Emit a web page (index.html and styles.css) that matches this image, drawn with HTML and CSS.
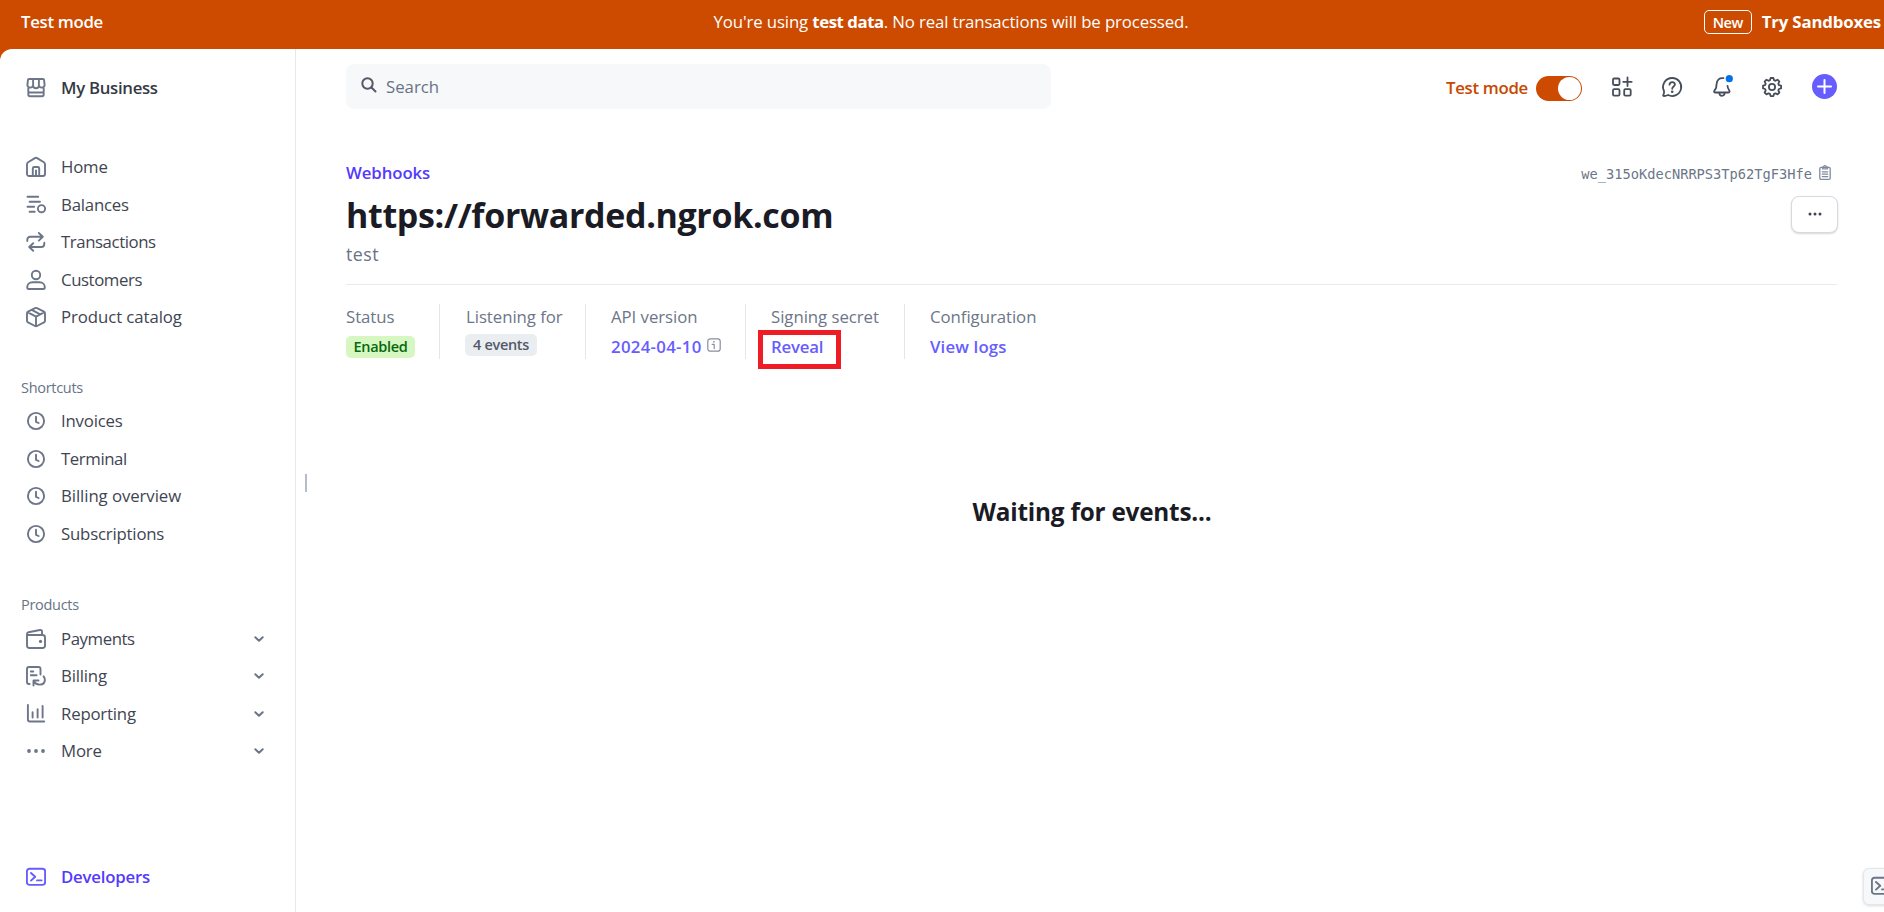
FILE: index.html
```html
<!DOCTYPE html>
<html lang="en">
<head>
<meta charset="utf-8">
<title>Webhooks</title>
<link rel="stylesheet" href="styles.css">
</head>
<body>
<svg class="defs" aria-hidden="true">
  <symbol id="clock" viewBox="0 0 20 20"><circle cx="10" cy="10" r="8.1"/><path d="M10 5.8v5l2.6 1.2"/></symbol>
  <symbol id="chev" viewBox="0 0 20 20"><path d="M6.3 8.2 10 11.8l3.7-3.6"/></symbol>
  <symbol id="term" viewBox="0 0 20 20"><rect x=".9" y="1.7" width="18.2" height="16.2" rx="2.6"/><path d="m5 6 4.2 3.8L5 13.6M11 13.4h4.6"/></symbol>
</svg>

<header class="banner">
  <div class="banner-mode">Test mode</div>
  <div class="banner-note">You're using <b>test data</b>. No real transactions will be processed.</div>
  <div class="banner-cta"><span class="new">New</span><span class="try">Try Sandboxes</span></div>
</header>

<div class="app">
  <nav class="sidebar">
    <a class="item business">
      <svg class="ico" viewBox="0 0 20 20"><path d="M3.2 1h13.6q1.2 0 1.3 1.2l.5 5a2.9 2.7 0 0 1-5.7.4 2.9 2.7 0 0 1-5.8 0 2.9 2.7 0 0 1-5.7-.4l.5-5Q2 1 3.2 1ZM7.1 1v6.600M12.900 1v6.600M2.300 10.500v6q0 1.700 1.700 1.700h12q1.700 0 1.700-1.700v-6M2.300 14.500h15.400"/></svg>
      <span>My Business</span></a>

    <div class="group main">
      <a class="item"><svg class="ico" viewBox="0 0 20 20"><path d="M1 7.300Q1 6 2.100 5.300L8.900 1.100q1.100-.6 2.200 0l6.800 4.200q1.100.7 1.100 2v9.400q0 2.300-2.300 2.300H3.300Q1 19 1 16.700ZM6.800 19v-7.600q0-1.400 1.400-1.400h3.600q1.400 0 1.400 1.400V19M10 13.500V19"/></svg><span>Home</span></a>
      <a class="item"><svg class="ico" viewBox="0 0 20 20"><path d="M1.500 1.800h10.700M3.600 6.800H14M1.500 11.800h6.700M3.600 16.800h5.100"/><circle cx="15.500" cy="13.700" r="3.600"/></svg><span>Balances</span></a>
      <a class="item"><svg class="ico" viewBox="0 0 20 20"><path d="M1.300 9V7.800q0-3 3-3h12.200M12.800 1l4 3.800-4 3.800M18.300 10.800V12q0 3-3 3H3.300M7.200 11.200l-4 3.800 4 3.800"/></svg><span class="tight">Transactions</span></a>
      <a class="item"><svg class="ico" viewBox="0 0 20 20"><circle cx="10" cy="5" r="4.200"/><path d="M1.200 17.300c0-3 2.300-5 5.200-5h7.200c2.900 0 5.200 2 5.200 5q0 1.700-1.500 1.700H2.700q-1.500 0-1.500-1.700Z"/></svg><span class="tight">Customers</span></a>
      <a class="item"><svg class="ico" viewBox="0 0 20 20"><path d="M9 1.100q1-.5 2 0l7 3.500q1 .5 1 1.600v7.600q0 1.100-1 1.600l-7 3.600q-1 .5-2 0l-7-3.600q-1-.5-1-1.600V6.200q0-1.100 1-1.600ZM1.500 5.200 10 9.600l8.500-4.400M10 9.600V19M5.800 2.900l8.400 4.400"/></svg><span class="wide">Product catalog</span></a>
    </div>

    <div class="group-label">Shortcuts</div>
    <div class="group">
      <a class="item"><svg class="ico"><use href="#clock"/></svg><span>Invoices</span></a>
      <a class="item"><svg class="ico"><use href="#clock"/></svg><span class="tight">Terminal</span></a>
      <a class="item"><svg class="ico"><use href="#clock"/></svg><span class="wide">Billing overview</span></a>
      <a class="item"><svg class="ico"><use href="#clock"/></svg><span>Subscriptions</span></a>
    </div>

    <div class="group-label products">Products</div>
    <div class="group">
      <a class="item"><svg class="ico" viewBox="0 0 20 20"><path d="M1 6h15.500Q19 6 19 8.500v8q0 2.500-2.500 2.500h-13Q1 19 1 16.500V5q0-1.500 1.500-1.800L14 1q2-.3 2 1.500V6"/><circle class="dot" cx="14.500" cy="12.400" r="1.600"/></svg><span class="tight">Payments</span><svg class="ico chev"><use href="#chev"/></svg></a>
      <a class="item"><svg class="ico" viewBox="0 0 20 20"><path d="M3.600 18H2.900Q1 18 1 16V3q0-2 2-2h9.500q2 0 2 2v5.500M4.800 5.500h2.500M4.800 9.300h5.800M7.500 19.500v-5h5M7.700 14.700c2 5.200 11 5.500 11.200-.8q0-2-1.300-3.600"/></svg><span>Billing</span><svg class="ico chev"><use href="#chev"/></svg></a>
      <a class="item"><svg class="ico" viewBox="0 0 20 20"><path d="M1.900 1v14.500q0 2 2 2H18.200M6.600 8.200v5.300M11.600 5.200v8.300M16.600 2v11.500"/></svg><span>Reporting</span><svg class="ico chev"><use href="#chev"/></svg></a>
      <a class="item"><svg class="ico" viewBox="0 0 20 20"><g class="dot"><circle cx="3" cy="10" r="1.900"/><circle cx="10" cy="10" r="1.900"/><circle cx="17" cy="10" r="1.900"/></g></svg><span>More</span><svg class="ico chev"><use href="#chev"/></svg></a>
    </div>

    <a class="item developers"><svg class="ico"><use href="#term"/></svg><span>Developers</span></a>
  </nav>

  <main class="content">
    <div class="handle"></div>
    <div class="topbar">
      <div class="search"><svg viewBox="0 0 16 16"><circle cx="6.500" cy="6.500" r="5.200"/><path d="m10.500 10.500 4 4"/></svg><span>Search</span></div>
      <div class="tools">
        <span class="mode">Test mode</span>
        <span class="toggle"><i></i></span>
        <svg class="tool" viewBox="0 0 20 20"><rect x="1" y="1.500" width="6.500" height="6.500" rx="1.200"/><rect x="1" y="12.200" width="6.500" height="6.500" rx="1.200"/><rect x="12.200" y="12.200" width="6.500" height="6.500" rx="1.200"/><path d="M15.500.5v8.500M11.200 4.800h8.500"/></svg>
        <svg class="tool" viewBox="0 0 20 20"><path d="M10.200 1a9 9 0 1 1-4.100 17q-2.400 1.100-4.300 1-1-.1-.5-1 1.200-1.700.7-4A9 9 0 0 1 10.200 1Z"/><path d="M7.500 7.700c.2-3.700 5.600-3.300 5.400-.2-.1 2-2.700 2-2.700 4.300"/><circle class="dot" cx="10.200" cy="14.700" r="1.300"/></svg>
        <svg class="tool bell" viewBox="0 0 20 20"><path d="M11.500 1.200C7.500.6 4.700 3 4.600 7L4.200 10.300q-.2 1.200-1.300 2.500Q1.200 15.500 3.200 15.500H16.400q2 0 .6-2.700-1.300-1.300-1.500-4M7.300 16c.3 3.700 5 3.700 5.400 0"/><circle class="alert" cx="17.300" cy="1.700" r="3.600"/></svg>
        <svg class="tool" viewBox="0 0 20 20"><path d="M8.600 1h2.800l.6 2.200 1.500.6 2-1.100 1.900 1.900-1.100 2 .6 1.500 2.200.6v2.700l-2.200.6-.6 1.500 1.100 2-1.900 1.900-2-1.100-1.500.6-.6 2.200H8.600L8 16.900l-1.500-.6-2 1.100-1.900-1.900 1.100-2-.6-1.500L1 11.400V8.700l2.100-.6.6-1.500-1.100-2 1.900-1.900 2 1.100L8 3.200Z"/><circle cx="10" cy="10" r="3.100"/></svg>
        <svg class="plus" viewBox="0 0 25 25"><circle cx="12.500" cy="12.500" r="12.500"/><path d="M12.500 6v13M6 12.500h13"/></svg>
      </div>
    </div>

    <section class="page">
      <div class="crumbs"><a class="crumb">Webhooks</a>
        <div class="id"><span>we_315oKdecNRRPS3Tp62TgF3Hfe</span><svg viewBox="0 0 12 15"><rect x=".8" y="2.300" width="10.400" height="12" rx="1.300"/><path d="M3.500 3.800V2.500q0-.6.700-.6h.5q.1-1.200 1.300-1.200T7.300 1.900h.5q.7 0 .7.600v1.300ZM3.300 6.800h5.400M3.300 9.200h5.400M3.300 11.600h5.400"/></svg></div>
      </div>
      <div class="title-row"><h1>https://forwarded.ngrok.com</h1>
        <button class="menu"><svg viewBox="0 0 14 4"><circle cx="2" cy="2" r="1.500"/><circle cx="7" cy="2" r="1.500"/><circle cx="12" cy="2" r="1.500"/></svg></button>
      </div>
      <p class="desc">test</p>

      <div class="facts">
        <div class="fact f1"><span class="k">Status</span><div class="v"><span class="badge ok">Enabled</span></div></div>
        <div class="fact f2"><span class="k">Listening for</span><div class="v"><span class="badge grey">4 events</span></div></div>
        <div class="fact f3"><span class="k">API version</span><div class="v"><a>2024-04-10</a><svg class="info" viewBox="0 0 14 14"><rect x=".8" y=".8" width="12.400" height="12.400" rx="2.500"/><path d="M5.200 6.400h2v4.200"/><circle class="dot" cx="6.900" cy="3.800" r=".9"/></svg></div></div>
        <div class="fact f4"><span class="k">Signing secret</span><div class="v"><a class="reveal">Reveal</a></div></div>
        <div class="fact f5"><span class="k">Configuration</span><div class="v"><a class="logs">View logs</a></div></div>
      </div>

      <h2>Waiting for events...</h2>
    </section>
  </main>
</div>
<div class="dock"><svg class="ico"><use href="#term"/></svg></div>
</body>
</html>
```
FILE: styles.css
```css
*, *::after { box-sizing: border-box; }
body {
  margin: 0;
  width: 1884px;
  height: 912px;
  overflow: hidden;
  position: relative;
  background: #cc4b00;
  color: #414552;
  font: 400 16.8px/24px "Open Sans", "Noto Sans", sans-serif;
  letter-spacing: -0.2px;
  white-space: nowrap;
}
svg { display: block; flex: none; overflow: visible; fill: none; stroke: currentColor; stroke-width: 1.9; stroke-linecap: round; stroke-linejoin: round; }
.defs { position: absolute; width: 0; height: 0; }
.dot { fill: currentColor; stroke: none; }

.banner { height: 49px; padding: 0 3px 5px 21px; display: grid; grid-template-columns: 1fr auto 1fr; align-items: center; color: #fff; }
.banner-mode { font-weight: 600; letter-spacing: -0.3px; }
.banner-note { letter-spacing: -0.12px; }
.banner-note b { font-weight: 700; letter-spacing: -0.45px; }
.banner-cta { display: flex; justify-content: flex-end; align-items: center; gap: 10px; }
.new { width: 48px; height: 24px; line-height: 23px; border: 1px solid #fff; border-radius: 5px; text-align: center; font-size: 14.5px; font-weight: 600; letter-spacing: -0.5px; }
.try { font-weight: 700; letter-spacing: -0.15px; padding-bottom: 1px; }

.app { display: flex; height: 863px; background: #fff; border-top-left-radius: 12px; }

.sidebar { width: 296px; border-right: 1px solid #e6e8eb; padding-top: 20px; }
.item { display: flex; align-items: center; height: 37.5px; padding-left: 26px; gap: 15px; }
.ico { width: 20px; height: 20px; color: #6c7688; }
.business { color: #353a44; font-weight: 600; letter-spacing: -0.3px; }
.tight { letter-spacing: -0.42px; }
.wide { letter-spacing: -0.08px; }
.main { margin-top: 42px; }
.group-label { padding-left: 21px; margin-top: 39.5px; height: 27px; font-size: 14.5px; color: #687385; letter-spacing: -0.3px; }
.products { margin-top: 40.5px; }
.chev { margin-left: auto; margin-right: 26px; stroke-width: 2; }
.developers { margin-top: 88px; color: #533afd; font-weight: 600; letter-spacing: -0.2px; }
.developers .ico { color: #675dff; }

.content { flex: 1; position: relative; padding: 15px 46px 0 50px; }
.handle { position: absolute; left: 9px; top: 425px; width: 2px; height: 18px; background: #b6bdca; }
.topbar { display: flex; justify-content: space-between; height: 45px; }
.search { width: 705px; height: 45px; border-radius: 8px; background: #f6f8fa; display: flex; align-items: center; gap: 9px; padding-left: 15px; color: #687385; font-weight: 500; }
.search svg { width: 16px; height: 16px; margin-top: -3px; color: #545969; stroke-width: 2; }
.search span { padding-top: 1px; letter-spacing: 0; }
.tools { display: flex; align-items: center; margin-right: 1px; color: #474e5a; height: 48px; }
.mode { color: #c84801; font-weight: 600; letter-spacing: -0.3px; }
.toggle { width: 46px; height: 25px; border-radius: 13px; background: #cc4b00; margin-left: 8px; margin-right: 30px; padding: 1px; display: flex; justify-content: flex-end; }
.toggle i { width: 23px; height: 23px; border-radius: 50%; background: #fff; }
.tool { width: 20px; height: 20px; margin-right: 30px; margin-top: -2px; stroke-width: 1.8; }
.alert { fill: #0073ea; stroke: none; }
.plus { width: 25px; height: 25px; margin-top: -3px; fill: #675dff; stroke: none; }
.plus path { stroke: #fff; stroke-width: 2; }

.page { padding-top: 52px; }
.crumbs { display: flex; justify-content: space-between; align-items: center; height: 24px; }
.crumb { color: #533afd; font-weight: 600; letter-spacing: -0.1px; }
.id { display: flex; align-items: center; gap: 7px; padding: 1px 7px 0 0; color: #6c7688; font: 13.7px/20px "DejaVu Sans Mono", monospace; letter-spacing: 0; }
.id svg { width: 12px; height: 15px; stroke-width: 1.3; color: #818b9c; margin-top: -2px; }
.title-row { display: flex; justify-content: space-between; align-items: center; height: 60px; }
h1 { margin: 0; font-size: 34px; line-height: 44px; font-weight: 700; letter-spacing: -0.34px; color: #1a1b25; }
.menu { width: 47px; height: 37px; margin-top: -2px; border: 1px solid #d5dbe1; border-radius: 8px; background: #fff; box-shadow: 0 1px 2px rgba(0, 0, 0, .16); display: grid; place-items: center; padding: 0; color: #414552; }
.menu svg { width: 14px; height: 4px; fill: currentColor; stroke: none; }
.desc { margin: -3px 0 0; height: 42px; line-height: 24px; font-size: 17.8px; letter-spacing: 0.45px; color: #687385; }

.facts { border-top: 1px solid #e8eaed; margin-right: 1px; padding-top: 19px; display: flex; }
.fact { height: 55px; padding-top: 1px; border-right: 1px solid #e3e6ea; }
.fact + .fact { padding-left: 25px; }
.f1 { width: 94px; }
.f2 { width: 146px; }
.f2.fact { padding-left: 26px; }
.f3 { width: 160px; }
.f4 { width: 159px; }
.f5 { border: 0; }
.k { display: block; color: #6c7688; letter-spacing: -0.05px; }
.v { display: flex; align-items: center; height: 32px; color: #675dff; font-weight: 600; padding-top: 3px; }
.v a { letter-spacing: 0.3px; }
.v .reveal { letter-spacing: -0.2px; position: relative; }
.reveal::after { content: ""; position: absolute; left: -13px; top: -5px; width: 83px; height: 39px; border: 5px solid #ee1c25; }
.v .logs { letter-spacing: 0.15px; }
.badge { height: 22px; line-height: 22px; border-radius: 5px; font-size: 14.5px; font-weight: 600; text-align: center; letter-spacing: -0.3px; }
.ok { width: 69px; background: #d7f7c2; color: #05690d; margin-top: 1px; }
.grey { width: 72px; margin: -4px 0 0 -1px; background: #ebeef1; color: #545969; }
.info { width: 14px; height: 14px; margin-left: 5px; margin-top: -3px; color: #87909f; stroke-width: 1.2; }

h2 { margin: 133px 0 0; text-align: center; font-size: 24.3px; line-height: 40px; font-weight: 700; letter-spacing: -0.2px; color: #1a1b25; }

.dock { position: absolute; left: 1863px; top: 868px; width: 42px; height: 37px; border: 1px solid #e3e7ec; border-radius: 6px; background: #f6f8fa; box-shadow: 0 1px 3px rgba(0, 0, 0, .14); padding: 7px; }
```
